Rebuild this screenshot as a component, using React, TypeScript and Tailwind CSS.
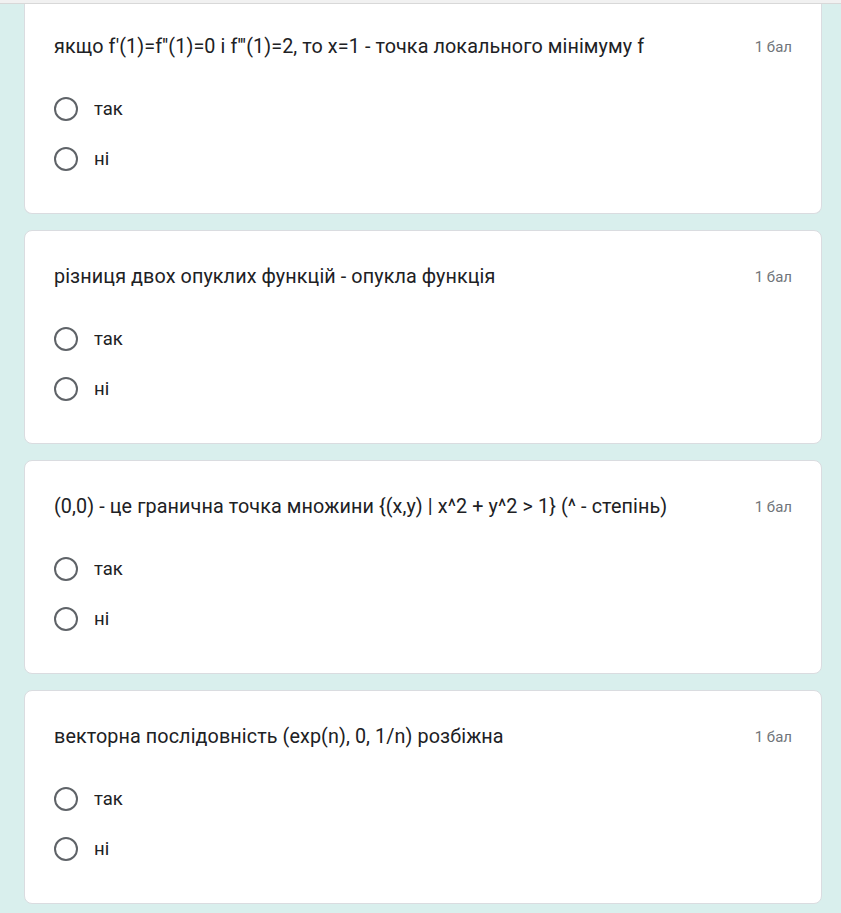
import React from 'react'

const questions = [
  "якщо f'(1)=f''(1)=0 і f'''(1)=2, то x=1 - точка локального мінімуму f",
  'різниця двох опуклих функцій - опукла функція',
  '(0,0) - це гранична точка множини {(x,y) | x^2 + y^2 > 1} (^ - степінь)',
  'векторна послідовність (exp(n), 0, 1/n) розбіжна',
]

function Option({ label }: { label: string }) {
  return (
    <label className="flex items-center h-[50px] cursor-pointer">
      <span className="w-[24px] h-[24px] rounded-full border-2 border-[#5f6368]" />
      <span className="ml-[16px] text-[18.5px] leading-[24px] text-[#202124]">{label}</span>
    </label>
  )
}

function Question({ text, first }: { text: string; first?: boolean }) {
  return (
    <div
      className={
        'bg-white border border-[#dadce0] rounded-lg w-[798px] ml-[24px] px-[29px] ' +
        (first ? 'border-t-0 rounded-t-none pt-[31px] pb-[29px]' : 'pt-[34px] pb-[29px]')
      }
    >
      <div className="flex items-center justify-between h-[24px]">
        <span className="text-[19.75px] leading-[24px] tracking-[0.1px] text-[#202124]">{text}</span>
        <span className="text-[15px] text-[#70757a] shrink-0">1 бал</span>
      </div>
      <div className="mt-[25px]">
        <Option label="так" />
        <Option label="ні" />
      </div>
    </div>
  )
}

export default function App() {
  return (
    <div
      className="min-h-screen bg-[#d9efed]"
      style={{ fontFamily: 'Roboto, "Liberation Sans", sans-serif' }}
    >
      <div className="h-[4px] bg-[#f1f1f1] border-b border-[#d8d8d8]" />
      <div className="flex flex-col gap-[16px]">
        {questions.map((q, i) => (
          <Question key={i} text={q} first={i === 0} />
        ))}
      </div>
    </div>
  )
}
